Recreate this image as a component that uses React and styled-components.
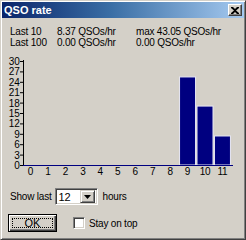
import React from "react";
import styled, { createGlobalStyle } from "styled-components";

const Global = createGlobalStyle`
  html, body { margin: 0; padding: 0; background: #d4d0c8; }
  body { font-family: "Liberation Sans", Arial, sans-serif; }
`;

const Window = styled.div`
  box-sizing: border-box;
  width: 246px;
  height: 240px;
  background: #d4d0c8;
  border-top: 1px solid #d4d0c8;
  border-left: 1px solid #d4d0c8;
  border-right: 1px solid #404040;
  border-bottom: 1px solid #404040;
  box-shadow: inset 1px 1px 0 #ffffff, inset -1px -1px 0 #808080;
  padding: 1px;
  display: flex;
  flex-direction: column;
  font-size: 10px;
  letter-spacing: -0.2px;
  color: #000;
  overflow: hidden;
`;

const TitleBar = styled.div`
  height: 16px;
  flex: none;
  background: linear-gradient(90deg, #0a246a 0%, #3a6ea5 45%, #a6caf0 100%);
  display: flex;
  align-items: center;
  justify-content: space-between;
  padding: 0 2px 0 2px;
`;

const Title = styled.span`
  color: #fff;
  font-weight: bold;
  font-size: 11px;
  letter-spacing: 0;
  line-height: 16px;
`;

const CloseButton = styled.div`
  box-sizing: border-box;
  width: 14px;
  height: 12px;
  background: #d4d0c8;
  border-top: 1px solid #fff;
  border-left: 1px solid #fff;
  border-right: 1px solid #404040;
  border-bottom: 1px solid #404040;
  box-shadow: inset -1px -1px 0 #808080;
  display: flex;
  align-items: center;
  justify-content: center;
`;

const Stats = styled.div`
  display: grid;
  grid-template-columns: 47px 79px auto;
  padding-left: 8px;
  margin-top: 8px;
  line-height: 11px;
`;

const Chart = styled.svg`
  display: block;
  flex: none;
  margin-top: 2px;
`;

const ControlRow = styled.div`
  display: flex;
  align-items: center;
  height: 17px;
  padding-left: 8px;
  margin-top: ${(p) => p.$top}px;
`;

const Combo = styled.div`
  box-sizing: border-box;
  width: 43px;
  height: 17px;
  margin: 0 5px 0 3px;
  background: #fff;
  border-top: 1px solid #808080;
  border-left: 1px solid #808080;
  border-right: 1px solid #fff;
  border-bottom: 1px solid #fff;
  box-shadow: inset 1px 1px 0 #404040, inset -1px -1px 0 #d4d0c8;
  display: flex;
  align-items: center;
  justify-content: space-between;
  padding: 1px 2px 1px 3px;
  font-size: 11px;
`;

const DropButton = styled.div`
  box-sizing: border-box;
  width: 15px;
  height: 13px;
  background: #d4d0c8;
  border-top: 1px solid #d4d0c8;
  border-left: 1px solid #d4d0c8;
  border-right: 1px solid #404040;
  border-bottom: 1px solid #404040;
  box-shadow: inset 1px 1px 0 #fff, inset -1px -1px 0 #808080;
  display: flex;
  align-items: center;
  justify-content: center;
`;

const OkButton = styled.div`
  box-sizing: border-box;
  width: 49px;
  height: 18px;
  margin-left: -2px;
  background: #d4d0c8;
  border: 1px solid #000;
  box-shadow: inset 1px 1px 0 #fff, inset -1px -1px 0 #404040, inset -2px -2px 0 #808080;
  display: flex;
  align-items: center;
  justify-content: center;
  padding: 3px;
`;

const Focus = styled.div`
  box-sizing: border-box;
  width: 100%;
  height: 100%;
  border: 1px dotted #000;
  display: flex;
  align-items: center;
  justify-content: center;
  font-size: 11px;
  letter-spacing: 0;
`;

const Check = styled.div`
  box-sizing: border-box;
  width: 12px;
  height: 12px;
  margin: 0 4px 0 16px;
  background: #fff;
  border-top: 1px solid #808080;
  border-left: 1px solid #808080;
  border-right: 1px solid #fff;
  border-bottom: 1px solid #fff;
  box-shadow: inset 1px 1px 0 #404040, inset -1px -1px 0 #d4d0c8;
`;

const values = [0, 0, 0, 0, 0, 0, 0, 0, 0, 25.4, 17.0, 8.37];
const ticks = [0, 3, 6, 9, 12, 15, 18, 21, 24, 27, 30];
const axisY = 166;
const scale = 104 / 30;
const slot = 17.45;

function RateChart() {
  return (
    <Chart width="242" height="130" viewBox="0 0 242 130">
      <g transform="translate(-2,-51)" fontFamily="Liberation Sans, Arial, sans-serif" fontSize="10">
        <line x1="23.5" y1="61" x2="23.5" y2={axisY} stroke="#000" />
        {ticks.map((t) => {
          const y = axisY - t * scale;
          return (
            <g key={t}>
              <line x1="20" y1={y + 0.5} x2="23" y2={y + 0.5} stroke="#000" />
              <text x="19.5" y={y + 4} textAnchor="end" fill="#000">
                {t}
              </text>
            </g>
          );
        })}
        {values.map((v, i) => {
          const cx = 30.5 + slot * i;
          const h = v * scale;
          return (
            <g key={i}>
              {v > 0 && (
                <rect
                  x={cx - 8}
                  y={axisY - h}
                  width="16"
                  height={h}
                  fill="#000080"
                  stroke="#e8e8f4"
                  strokeWidth="1"
                />
              )}
              <text x={cx} y="176" textAnchor="middle" fill="#000">
                {i}
              </text>
            </g>
          );
        })}
        <line x1="23" y1={axisY + 0.5} x2="233" y2={axisY + 0.5} stroke="#000080" />
      </g>
    </Chart>
  );
}

export default function App() {
  return (
    <>
      <Global />
      <Window>
        <TitleBar>
          <Title>QSO rate</Title>
          <CloseButton>
            <svg width="8" height="7" viewBox="0 0 8 7">
              <path d="M0 0h2l2 2 2-2h2v1L5 3.5 8 6v1H6L4 5 2 7H0V6l3-2.5L0 1z" fill="#000" />
            </svg>
          </CloseButton>
        </TitleBar>
        <Stats>
          <span>Last 10</span>
          <span>8.37 QSOs/hr</span>
          <span>max 43.05 QSOs/hr</span>
          <span>Last 100</span>
          <span>0.00 QSOs/hr</span>
          <span>0.00 QSOs/hr</span>
        </Stats>
        <RateChart />
        <ControlRow $top={8}>
          <span>Show last</span>
          <Combo>
            <span>12</span>
            <DropButton>
              <svg width="7" height="4" viewBox="0 0 7 4">
                <path d="M0 0h7L3.5 4z" fill="#000" />
              </svg>
            </DropButton>
          </Combo>
          <span>hours</span>
        </ControlRow>
        <ControlRow $top={9} style={{ height: 18 }}>
          <OkButton>
            <Focus>OK</Focus>
          </OkButton>
          <Check />
          <span>Stay on top</span>
        </ControlRow>
      </Window>
    </>
  );
}
